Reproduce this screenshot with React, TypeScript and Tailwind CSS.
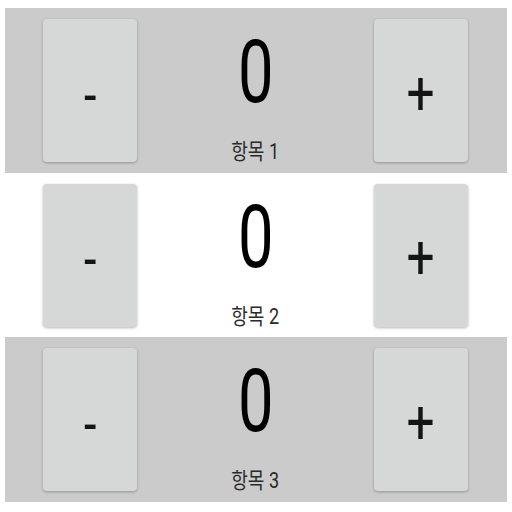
import { useState } from "react";

const ROWS = ["항목 1", "항목 2", "항목 3"];

function CounterRow({ label, shaded }: { label: string; shaded: boolean }) {
  const [count, setCount] = useState(0);

  return (
    <div
      className={`flex h-[164.5px] items-start justify-between pl-[38px] pr-[39px] pt-[11px] ${
        shaded ? "bg-[#cbcbcb]" : "bg-white"
      }`}
    >
      <button
        onClick={() => setCount(count - 1)}
        className="flex h-[143px] w-[94px] items-center justify-center rounded-[4px] bg-[#d6d8d7] shadow-[0_1px_3px_rgba(0,0,0,0.28)]"
      >
        <span className="inline-block scale-x-75 pt-[10px] text-[60px] leading-none text-[#141414]">-</span>
      </button>

      <div className="flex flex-col items-center pt-[9px]">
        <span className="inline-block scale-x-[0.72] text-[88px] font-normal leading-none text-black">{count}</span>
        <span className="mt-[25px] inline-block scale-x-[0.82] text-[22px] leading-none text-[#2a2a2a]">{label}</span>
      </div>

      <button
        onClick={() => setCount(count + 1)}
        className="flex h-[143px] w-[94px] items-center justify-center rounded-[4px] bg-[#d6d8d7] shadow-[0_1px_3px_rgba(0,0,0,0.28)]"
      >
        <span className="inline-block scale-x-[0.8] pt-[4px] text-[62px] leading-none text-[#141414]">+</span>
      </button>
    </div>
  );
}

export default function App() {
  return (
    <div
      className="h-[512px] w-[512px] overflow-hidden bg-white pl-[5px] pr-[5px] pt-[8px]"
      style={{ fontFamily: 'Roboto, "Noto Sans CJK KR", sans-serif' }}
    >
      {ROWS.map((label, i) => (
        <CounterRow key={label} label={label} shaded={i % 2 === 0} />
      ))}
    </div>
  );
}
